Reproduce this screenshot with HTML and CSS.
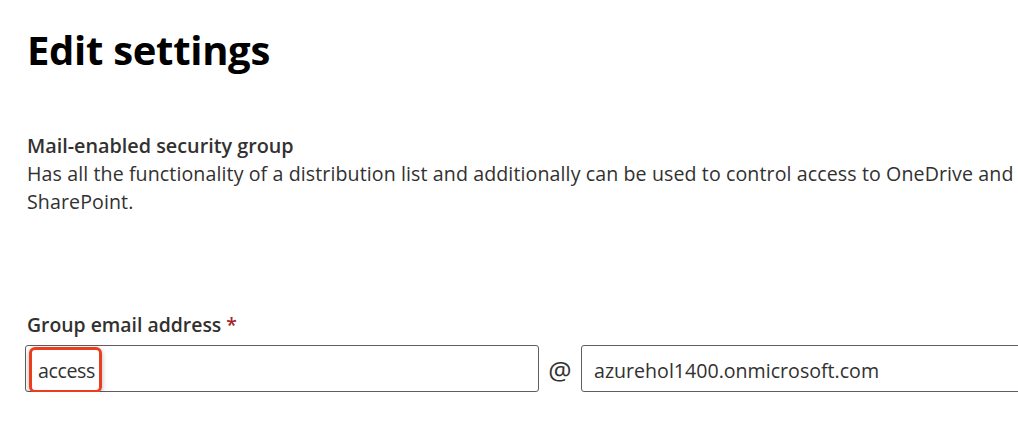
FILE: index.html
```html
<!DOCTYPE html>
<html>
<head>
<meta charset="utf-8">
<link rel="stylesheet" href="styles.css">
</head>
<body>
<main class="panel">
  <h1 class="title">Edit settings</h1>
  <section class="type">
    <div class="type-name">Mail-enabled security group</div>
    <p class="type-desc">Has all the functionality of a distribution list and additionally can be used to control access to OneDrive and SharePoint.</p>
  </section>
  <section class="field">
    <label class="field-label">Group email address <span class="req">*</span></label>
    <div class="email-row">
      <div class="input local">
        <span class="value">access</span>
        <span class="highlight"></span>
      </div>
      <span class="at">@</span>
      <div class="input domain"><span class="value">azurehol1400.onmicrosoft.com</span></div>
    </div>
  </section>
</main>
</body>
</html>
```

FILE: styles.css
```css
html, body {
  margin: 0;
  padding: 0;
  background: #ffffff;
  overflow: hidden;
}
body {
  width: 1018px;
  height: 426px;
  font-family: "Open Sans", "Noto Sans", sans-serif;
  color: #323130;
}
.panel {
  padding: 0 0 0 27px;
  box-sizing: border-box;
  width: 1018px;
  overflow: hidden;
}
.title {
  margin: 0;
  padding-top: 22px;
  font-size: 40px;
  line-height: 56px;
  font-weight: 700;
  color: #000;
  letter-spacing: -0.3px;
}
.type {
  margin-top: 54px;
}
.type-name {
  font-size: 19.8px;
  font-weight: 600;
  line-height: 28px;
}
.type-desc {
  margin: 0;
  font-size: 19.6px;
  line-height: 28px;
  width: 991px;
  letter-spacing: 0.1px;
}
.field {
  margin-top: 97px;
}
.field-label {
  display: block;
  font-size: 19.4px;
  font-weight: 600;
  line-height: 24px;
}
.req {
  color: #a4262c;
}
.email-row {
  display: flex;
  align-items: center;
  margin-top: 8px;
  width: 1100px;
}
.input {
  position: relative;
  box-sizing: border-box;
  height: 47px;
  border: 1px solid #605e5c;
  border-radius: 3px;
  display: flex;
  align-items: center;
  padding: 4px 12px 0;
  font-size: 19.6px;
  flex: none;
}
.local {
  width: 514px;
  margin-left: -2px;
}
.local .value {
  letter-spacing: -0.4px;
}
.domain {
  width: 480px;
}
.at {
  width: 42px;
  text-align: center;
  font-size: 26px;
  line-height: 30px;
  padding-top: 2px;
  color: #323130;
  flex: none;
}
.highlight {
  position: absolute;
  left: 3px;
  top: 1px;
  width: 73px;
  height: 46px;
  box-sizing: border-box;
  border: 3px solid #ea3e1e;
  border-radius: 6px;
  box-shadow: 0 2px 5px rgba(0,0,0,0.3);
}
```
